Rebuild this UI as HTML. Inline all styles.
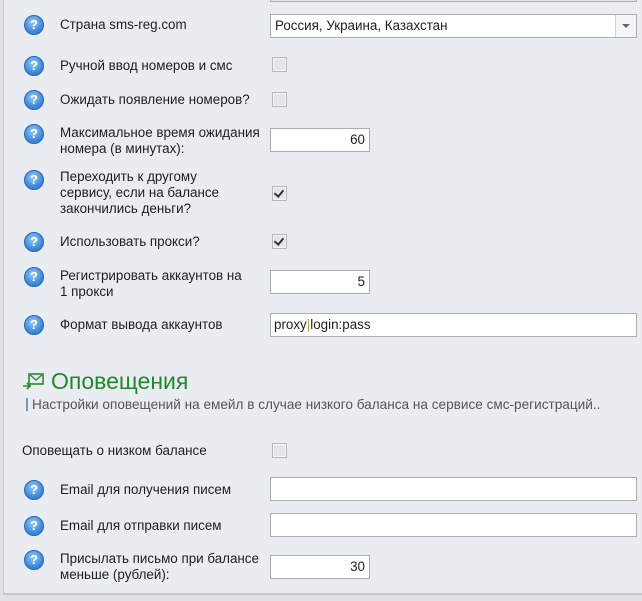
<!DOCTYPE html>
<html><head><meta charset="utf-8"><style>
body{margin:0;width:642px;height:601px;background:#dfe2e7;position:relative;overflow:hidden;font-family:"Liberation Sans","DejaVu Sans",sans-serif;font-size:13.4px;color:#1e1e1e}
.panel{position:absolute;left:3px;top:-2px;width:639px;height:597px;background:#e9ecf1;border-left:1px solid #c4c7cc;border-bottom:2px solid #c4c7cc;box-sizing:border-box}
.a{position:absolute}
.ic{position:absolute;width:20px;height:20px;border-radius:50%;background:radial-gradient(circle at 45% 35%,#9ccbf7,#3f8bdc 60%,#2a6fc0);border:1px solid #2c68b0;box-sizing:border-box;color:#fff;font:bold 13px "Liberation Sans",sans-serif;text-align:center;line-height:18px}
.lb{position:absolute;left:60px;line-height:16px}
.in{position:absolute;background:#fff;border:1px solid #abadb3;box-sizing:border-box;height:24px;line-height:22px;padding:0 4px}
.cb{position:absolute;left:272px;width:15px;height:15px;border:1px solid #b5b7bb;background:#e3e5e8;box-sizing:border-box;box-shadow:inset 0 0 0 1px #f4f5f6}
.cb.c::after{content:"";position:absolute;left:3px;top:1px;width:4px;height:7px;border:solid #333;border-width:0 2px 2px 0;transform:rotate(40deg)}
.r{text-align:right}
</style></head><body>
<div class="panel"></div>
<div class="in" style="left:270px;top:-22px;width:367px;background:#e3e5e8"></div>

<div class="ic" style="left:24px;top:15px">?</div><div class="lb" style="top:17px">Страна sms-reg.com</div>
<div class="in" style="left:270px;top:14px;width:367px">Россия, Украина, Казахстан<div class="a" style="right:0;top:0;width:20px;height:22px;border-left:1px solid #d0d2d6;background:#f4f5f6"><div class="a" style="left:6px;top:9px;border:4px solid transparent;border-top:4px solid #666"></div></div></div>

<div class="ic" style="left:24px;top:56px">?</div><div class="lb" style="top:58px">Ручной ввод номеров и смс</div>
<div class="cb" style="top:57px"></div>

<div class="ic" style="left:24px;top:90px">?</div><div class="lb" style="top:92px">Ожидать появление номеров?</div>
<div class="cb" style="top:92px"></div>

<div class="ic" style="left:24px;top:124px">?</div><div class="lb" style="top:125px">Максимальное время ожидания<br>номера (в минутах):</div>
<div class="in r" style="left:270px;top:128px;width:100px">60</div>

<div class="ic" style="left:24px;top:170px">?</div><div class="lb" style="top:169px">Переходить к другому<br>сервису, если на балансе<br>закончились деньги?</div>
<div class="cb c" style="top:186px"></div>

<div class="ic" style="left:24px;top:232px">?</div><div class="lb" style="top:234px">Использовать прокси?</div>
<div class="cb c" style="top:234px"></div>

<div class="ic" style="left:24px;top:267px">?</div><div class="lb" style="top:268px">Регистрировать аккаунтов на<br>1 прокси</div>
<div class="in r" style="left:270px;top:270px;width:100px">5</div>

<div class="ic" style="left:24px;top:315px">?</div><div class="lb" style="top:317px">Формат вывода аккаунтов</div>
<div class="in" style="left:270px;top:313px;width:367px;padding-left:3px">proxy<span style="color:#c9a24a">|</span>login:pass</div>

<svg class="a" style="left:22px;top:372px" width="24" height="18" viewBox="0 0 24 18"><rect x="7" y="2" width="14" height="10" fill="none" stroke="#2e8b2e" stroke-width="1.6"/><path d="M7 2l7 6 7-6" fill="none" stroke="#2e8b2e" stroke-width="1.4"/><path d="M1 14h8M5 11l3 3-3 3" fill="none" stroke="#2e8b2e" stroke-width="1.6"/></svg>
<div class="a" style="left:51px;top:368px;font-size:23px;color:#23882d">Оповещения</div>
<div class="a" style="left:26px;top:397px;color:#555;font-size:13.6px"><span style="display:inline-block;width:2px;height:13px;background:#7a9ab8;vertical-align:-2px;margin-right:4px"></span>Настройки оповещений на емейл в случае низкого баланса на сервисе смс-регистраций..</div>

<div class="a" style="left:22px;top:443px;line-height:16px">Оповещать о низком балансе</div>
<div class="cb" style="top:443px"></div>

<div class="ic" style="left:24px;top:480px">?</div><div class="lb" style="top:482px">Email для получения писем</div>
<div class="in" style="left:270px;top:477px;width:367px"></div>

<div class="ic" style="left:24px;top:516px">?</div><div class="lb" style="top:518px">Email для отправки писем</div>
<div class="in" style="left:270px;top:513px;width:367px"></div>

<div class="ic" style="left:24px;top:550px">?</div><div class="lb" style="top:551px">Присылать письмо при балансе<br>меньше (рублей):</div>
<div class="in r" style="left:270px;top:555px;width:100px">30</div>
</body></html>
